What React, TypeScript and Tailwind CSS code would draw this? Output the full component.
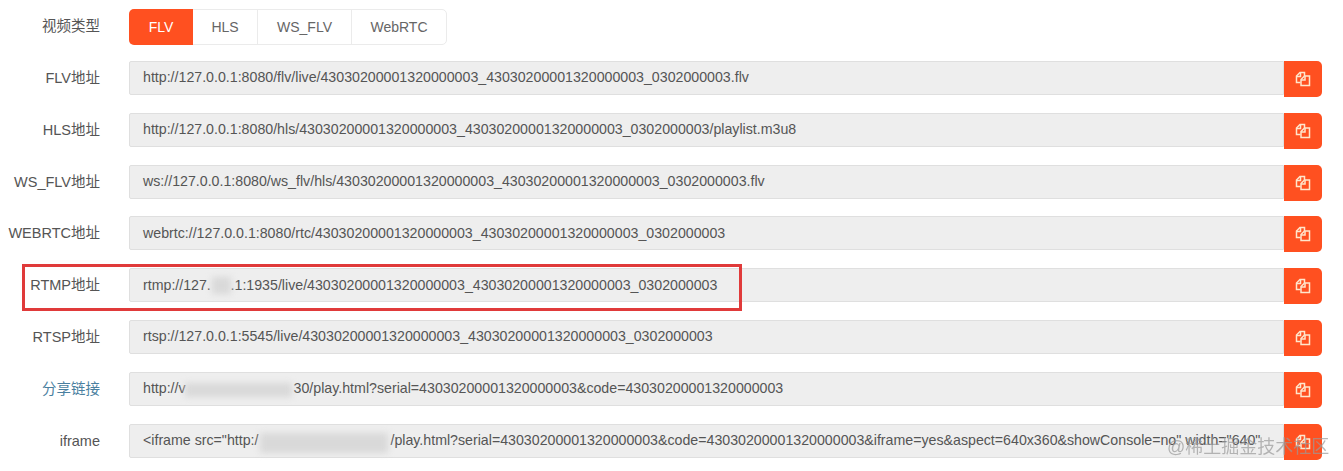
import React from 'react'

const sans = '[font-family:"Liberation_Sans","Noto_Sans_CJK_SC",sans-serif]'

type Row = {
  label: string
  value: React.ReactNode
  link?: boolean
}

function Smudge({ className }: { className: string }) {
  return <span className={`absolute bg-[#d9d9d9] blur-[3px] ${className}`} />
}

const rows: Row[] = [
  { label: 'FLV地址', value: 'http://127.0.0.1:8080/flv/live/43030200001320000003_43030200001320000003_0302000003.flv' },
  { label: 'HLS地址', value: 'http://127.0.0.1:8080/hls/43030200001320000003_43030200001320000003_0302000003/playlist.m3u8' },
  { label: 'WS_FLV地址', value: 'ws://127.0.0.1:8080/ws_flv/hls/43030200001320000003_43030200001320000003_0302000003.flv' },
  { label: 'WEBRTC地址', value: 'webrtc://127.0.0.1:8080/rtc/43030200001320000003_43030200001320000003_0302000003' },
  {
    label: 'RTMP地址',
    value: (
      <>
        rtmp://127.<span className="text-[#eeeeee]">0.0</span>.1:1935/live/43030200001320000003_43030200001320000003_0302000003
      </>
    ),
  },
  { label: 'RTSP地址', value: 'rtsp://127.0.0.1:5545/live/43030200001320000003_43030200001320000003_0302000003' },
  {
    label: '分享链接',
    link: true,
    value: (
      <>
        http://v<span className="inline-block w-[108px]" />30/play.html?serial=43030200001320000003&code=43030200001320000003
      </>
    ),
  },
  {
    label: 'iframe',
    value: (
      <>
        {'<iframe src="http:/'}
        <span className="inline-block w-[132px]" />
        {'/play.html?serial=43030200001320000003&code=43030200001320000003&iframe=yes&aspect=640x360&showConsole=no" width="640"'}
      </>
    ),
  },
]

const tabs = ['HLS', 'WS_FLV', 'WebRTC']

function CopyIcon() {
  return (
    <svg width="16" height="16" viewBox="0 0 16 16" fill="none" stroke="#ffe6cc" strokeWidth="1.5">
      <path d="M5.5 11.5H1.5V5L5 1.5H9.5V5" />
      <path d="M1.5 5.5H5.5V1.5" />
      <path d="M10 5H14.5V14.5H6V8.5L9.5 5" />
      <path d="M6 9H10V5" />
    </svg>
  )
}

export default function App() {
  return (
    <div className={`relative w-[1343px] h-[471px] overflow-hidden bg-white ${sans} text-[14px] text-[#555555]`}>
      <div className="flex flex-col pt-[9px] pr-[21px]">
        <div className="flex items-center h-9 mb-4">
          <label className="w-[100px] text-right shrink-0 text-[14.5px]">视频类型</label>
          <div className="flex ml-[29px] h-9 rounded-[5px] border border-[#ebebeb] text-[#666666]">
            <div className="w-[64px] -m-px mr-0 rounded-l-[5px] bg-[#ff5020] text-white flex items-center justify-center">FLV</div>
            {tabs.map((tab, i) => (
              <div
                key={tab}
                className={`flex items-center justify-center border-[#ebebeb] ${i > 0 ? 'border-l' : ''} ${
                  i === 0 ? 'w-[64px]' : i === 1 ? 'w-[94px]' : 'w-[95px]'
                }`}
              >
                {tab}
              </div>
            ))}
          </div>
        </div>

        <div className="flex flex-col gap-[15.8px]">
          {rows.map((row) => (
            <div key={row.label} className="flex items-start h-9">
              <label className={`w-[100px] h-[34px] leading-[34px] shrink-0 text-right whitespace-nowrap text-[14.5px] ${row.link ? 'text-[#4a7f9f]' : ''}`}>
                {row.label}
              </label>
              <div className="ml-[29px] flex-1 min-w-0 h-[34px] flex items-center px-[13px] text-[14.2px] bg-[#eeeeee] border border-[#dfdfdf] rounded-l-[2px] overflow-hidden whitespace-nowrap">
                <span>{row.value}</span>
              </div>
              <button className="w-[38px] h-9 shrink-0 bg-[#ff5020] rounded-r-[5px] flex items-center justify-center">
                <CopyIcon />
              </button>
            </div>
          ))}
        </div>
      </div>

      {/* annotation box drawn over the RTMP row */}
      <div className="absolute left-[22px] top-[264px] w-[720px] h-[47px] border-[3px] border-[#e03a3a]" />

      {/* blurred-out parts of the urls */}
      <Smudge className="left-[212px] top-[277px] w-[19px] h-[17px]" />
      <Smudge className="left-[185px] top-[383px] w-[107px] h-[14px]" />
      <Smudge className="left-[260px] top-[433px] w-[128px] h-[20px]" />

      {/* platform watermark */}
      <div className="absolute left-[1167px] top-[435px] text-[18px] leading-6 text-[#9a9a9a] opacity-70 whitespace-nowrap">
        @稀土掘金技术社区
      </div>
    </div>
  )
}
